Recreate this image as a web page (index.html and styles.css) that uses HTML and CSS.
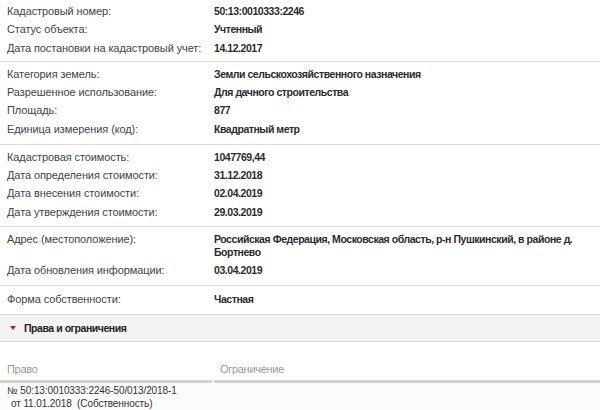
FILE: index.html
```html
<!DOCTYPE html>
<html lang="ru">
<head>
<meta charset="utf-8">
<link rel="stylesheet" href="styles.css">
</head>
<body>
<div class="page">
  <div class="section first">
    <div class="row"><div class="label">Кадастровый номер:</div><div class="value">50:13:0010333:2246</div></div>
    <div class="row"><div class="label">Статус объекта:</div><div class="value">Учтенный</div></div>
    <div class="row"><div class="label">Дата постановки на кадастровый учет:</div><div class="value">14.12.2017</div></div>
  </div>
  <div class="section">
    <div class="row"><div class="label">Категория земель:</div><div class="value">Земли сельскохозяйственного назначения</div></div>
    <div class="row"><div class="label">Разрешенное использование:</div><div class="value">Для дачного строительства</div></div>
    <div class="row"><div class="label">Площадь:</div><div class="value">877</div></div>
    <div class="row"><div class="label">Единица измерения (код):</div><div class="value">Квадратный метр</div></div>
  </div>
  <div class="section">
    <div class="row"><div class="label">Кадастровая стоимость:</div><div class="value">1047769,44</div></div>
    <div class="row"><div class="label">Дата определения стоимости:</div><div class="value">31.12.2018</div></div>
    <div class="row"><div class="label">Дата внесения стоимости:</div><div class="value">02.04.2019</div></div>
    <div class="row"><div class="label">Дата утверждения стоимости:</div><div class="value">29.03.2019</div></div>
  </div>
  <div class="section">
    <div class="row"><div class="label">Адрес (местоположение):</div><div class="value">Российская Федерация, Московская область, р-н Пушкинский, в районе д. Бортнево</div></div>
    <div class="row"><div class="label">Дата обновления информации:</div><div class="value">03.04.2019</div></div>
  </div>
  <div class="section last">
    <div class="row"><div class="label">Форма собственности:</div><div class="value">Частная</div></div>
  </div>
  <div class="band"><span class="caret"></span><span class="band-title">Права и ограничения</span></div>
  <div class="rights">
    <div class="rights-head">
      <div class="col col-left">Право</div>
      <div class="col col-right">Ограничение</div>
    </div>
    <div class="rights-row">
      <div class="cell">№ 50:13:0010333:2246-50/013/2018-1<br><span class="indent">от 11.01.2018&nbsp; (Собственность)</span></div>
      <div class="cell"></div>
    </div>
  </div>
</div>
</body>
</html>
```
FILE: styles.css
```css
html, body {
  margin: 0;
  padding: 0;
  background: #fff;
}
body {
  font-family: "Liberation Sans", Arial, sans-serif;
  font-size: 11px;
  color: #333;
  width: 600px;
  height: 410px;
  overflow: hidden;
}
.section {
  padding: 3px 0 5.6px 0;
  border-bottom: 1px solid #dcdcdc;
}
.section.first {
  padding-top: 2px;
  padding-bottom: 4px;
}
.section.last {
  padding-top: 4px;
}
.row {
  display: grid;
  grid-template-columns: 207px 1fr;
  padding: 3px 0 3px 7px;
  line-height: 12.3px;
}
.label {
  color: #444;
  letter-spacing: -0.1px;
}
.value {
  font-weight: bold;
  font-size: 10.5px;
  color: #2b2b2b;
  letter-spacing: -0.45px;
  padding-right: 20px;
}
.band {
  height: 26px;
  background: #f3f3f3;
  border-bottom: 1px solid #dcdcdc;
  display: flex;
  align-items: center;
  padding-left: 10px;
}
.caret {
  width: 0;
  height: 0;
  border-left: 3px solid transparent;
  border-right: 3px solid transparent;
  border-top: 4px solid #9b2a22;
  margin-right: 8px;
}
.band-title {
  font-weight: bold;
  font-size: 10.5px;
  color: #222;
  letter-spacing: -0.45px;
}
.rights {
  padding-top: 21.5px;
}
.rights-head {
  display: grid;
  grid-template-columns: 212px 1fr;
  column-gap: 2px;
}
.col {
  color: #9a9a9a;
  font-size: 11px;
  letter-spacing: -0.3px;
  padding: 0 0 3.5px 7px;
  border-bottom: 3px solid #d2d2d2;
  line-height: 13px;
}
.col-right {
  padding-left: 6px;
}
.rights-row {
  display: grid;
  grid-template-columns: 212px 1fr;
  background: #fbfbfb;
  border-bottom: 1px solid #dcdcdc;
}
.cell {
  padding: 1px 0 1px 7px;
  line-height: 13px;
  font-size: 10px;
  letter-spacing: -0.1px;
  color: #333;
}
.indent {
  padding-left: 4px;
}
```
